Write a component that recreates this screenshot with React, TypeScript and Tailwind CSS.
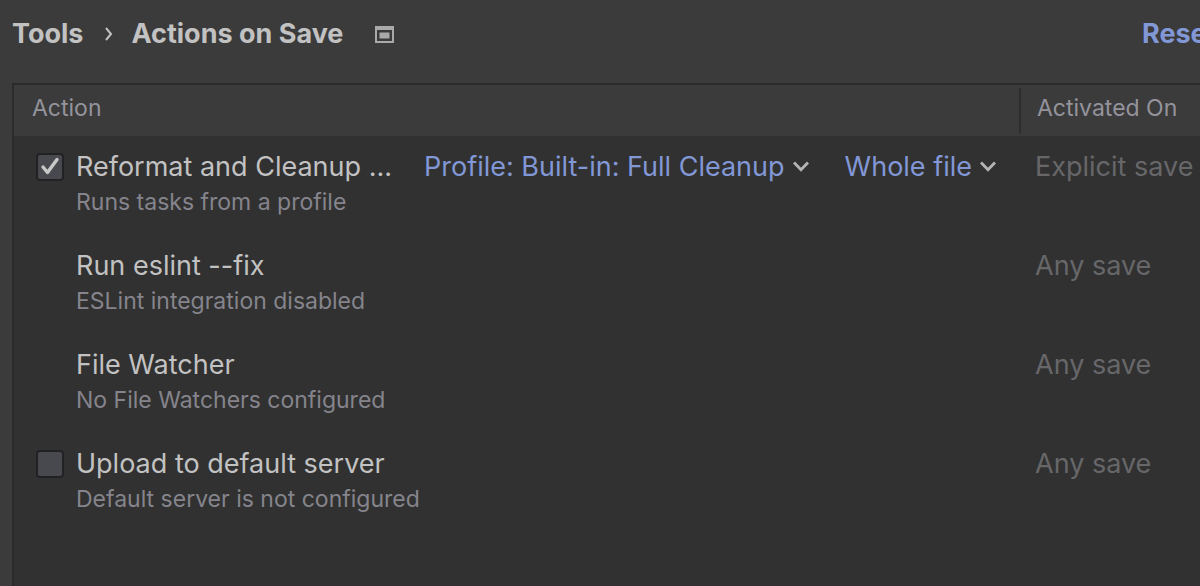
import React, { useState } from 'react';
interface SaveAction {
  id: string;
  title: string;
  note: string;
  activatedOn: string;
  checkable?: boolean;
}
const actions: SaveAction[] = [
  { id: 'reformat', title: 'Reformat and Cleanup ...', note: 'Runs tasks from a profile', activatedOn: 'Explicit save', checkable: true },
  { id: 'eslint', title: 'Run eslint --fix', note: 'ESLint integration disabled', activatedOn: 'Any save' },
  { id: 'watcher', title: 'File Watcher', note: 'No File Watchers configured', activatedOn: 'Any save' },
  { id: 'upload', title: 'Upload to default server', note: 'Default server is not configured', activatedOn: 'Any save', checkable: true }
];
const LinkSelect = ({ label, options }: { label: string; options: string[] }) => {
  return <div className="relative flex items-center">
      <select aria-label={label} className="appearance-none [field-sizing:content] cursor-pointer bg-transparent pr-6 leading-[34px] text-[#8297d6] outline-none">
        {options.map(option => <option key={option}>{option}</option>)}
      </select>
      <svg className="pointer-events-none absolute right-0" width="16" height="12" viewBox="0 0 16 12" fill="none" stroke="#b4b4b4" strokeWidth="2.8">
        <path d="M1 1.5 L8 8.7 L15 1.5" />
      </svg>
    </div>;
};
const Checkbox = ({ id, checked, onChange }: { id: string; checked: boolean; onChange: () => void }) => {
  return <span className="relative flex size-7">
      <input id={id} type="checkbox" checked={checked} onChange={onChange} className="size-7 appearance-none rounded-sm border-2 border-[#222224] bg-[#48494f]" />
      {checked && <svg className="pointer-events-none absolute inset-0" width="28" height="28" viewBox="0 0 28 28" fill="none" stroke="#c8c8c8" strokeWidth="3.4" strokeLinecap="round" strokeLinejoin="round">
          <path d="M7 14 L11.5 19.5 L21 6.5" />
        </svg>}
    </span>;
};
export default function App() {
  const [checked, setChecked] = useState<Record<string, boolean>>({ reformat: true });
  const toggle = (id: string) => setChecked(prev => ({ ...prev, [id]: !prev[id] }));
  return <div className="flex min-h-screen flex-col overflow-hidden bg-[#3b3b3b] pl-3 font-['Inter',sans-serif] text-[27px] text-[#c2c2c2]">
      <header className="flex h-[83px] items-start pt-4 font-bold leading-9">
        <nav className="flex items-center">
          <a href="#tools">Tools</a>
          <svg className="ml-[22px] mr-[18px]" width="8" height="14" viewBox="0 0 8 14" fill="none" stroke="#c2c2c2" strokeWidth="2">
            <path d="M1 1 L6 7 L1 13" />
          </svg>
          <h1>Actions on Save</h1>
        </nav>
        <svg className="ml-8 mt-[10px]" width="19" height="17" viewBox="0 0 19 17">
          <path d="M0 0h19v17H0z M2 4v11h15V4z" fill="#a9a9a9" fillRule="evenodd" />
          <path d="M4.5 6.5h10v6h-10z" fill="#a9a9a9" />
        </svg>
        <button type="button" className="ml-auto w-[58px] overflow-hidden whitespace-nowrap text-left text-[#8297d6]">Reset</button>
      </header>
      <main className="grow border-l-2 border-t-2 border-[#2b2b2b] bg-[#313131]">
        <table className="w-full table-fixed border-collapse text-left">
          <colgroup>
            <col />
            <col className="w-[181px]" />
          </colgroup>
          <thead className="h-[51px] bg-[#3b3b3b] text-[23px] leading-[40px] text-[#94939c]">
            <tr>
              <th className="pb-[6px] pl-[18px] font-normal">Action</th>
              <th className="p-0 font-normal">
                <div className="whitespace-nowrap border-l-2 border-[#2e2e2e] pb-[6px] pl-4">Activated On</div>
              </th>
            </tr>
          </thead>
          <tbody>
            {actions.map(action => <tr key={action.id} className="align-top">
                <td className="py-[14px] pl-[22px]">
                  <div className="grid grid-cols-[28px_1fr] items-center gap-x-3">
                    {action.checkable ? <Checkbox id={action.id} checked={!!checked[action.id]} onChange={() => toggle(action.id)} /> : <span />}
                    <div className="flex leading-[34px]">
                      {action.checkable ? <label htmlFor={action.id}>{action.title}</label> : <span>{action.title}</span>}
                      {action.id === 'reformat' && <div className="ml-8 flex gap-9">
                          <LinkSelect label="Profile" options={['Profile: Built-in: Full Cleanup', 'Profile: Built-in: Reformat Code']} />
                          <LinkSelect label="Scope" options={['Whole file', 'Changed lines']} />
                        </div>}
                    </div>
                    <p className="col-start-2 text-[23px] leading-[37px] text-[#85848c]">{action.note}</p>
                  </div>
                </td>
                <td className="whitespace-nowrap py-[14px] pl-4 leading-[34px] text-[#67676a]">{action.activatedOn}</td>
              </tr>)}
          </tbody>
        </table>
      </main>
    </div>;
}
